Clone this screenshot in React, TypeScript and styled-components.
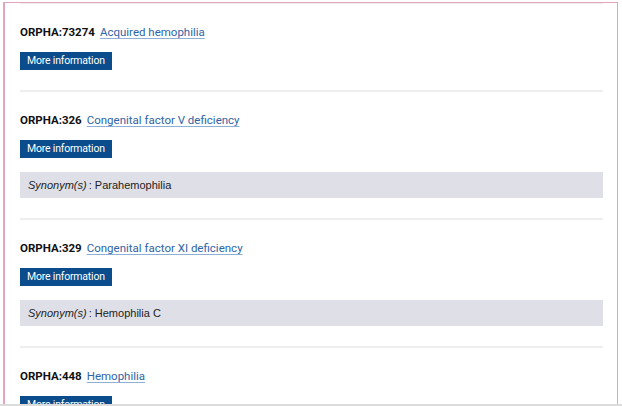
import styled, { createGlobalStyle } from 'styled-components';

interface IDisease {
    orpha: string;
    name: string;
    synonyms?: string[];
}

const diseases: IDisease[] = [
    { orpha: '73274', name: 'Acquired hemophilia' },
    { orpha: '326', name: 'Congenital factor V deficiency', synonyms: ['Parahemophilia'] },
    { orpha: '329', name: 'Congenital factor XI deficiency', synonyms: ['Hemophilia C'] },
    { orpha: '448', name: 'Hemophilia' },
];

const GlobalStyle = createGlobalStyle`
html, body {
  margin:0;
  padding:0;
  background:#fff;
  overflow:hidden;
}
body {
  font-family: Roboto, "Liberation Sans", Arial, sans-serif;
  color:#1a1a1a;
}
`;

const Page = styled.div`
height:406px;
box-sizing:border-box;
overflow:hidden;
border-bottom:2px solid #dcdcdc;
padding-top:2px;
`;

const Frame = styled.div`
margin-left:3px;
width:615px;
height:100%;
box-sizing:border-box;
border:1px solid #e7a4b8;
border-bottom:none;
border-left-width:2px;
padding:0 14px 0 15px;
`;

const List = styled.ul`
list-style:none;
margin:0;
padding:0;
border-top:1px solid #eeeeee;
`;

const Item = styled.li`
padding:19px 0 20px;
border-bottom:2px solid #eeeeee;
`;

const Title = styled.div`
display:flex;
align-items:baseline;
gap:5px;
height:18px;
line-height:18px;
font-size:11.5px;
`;

const Orpha = styled.span`
font-weight:700;
color:#111;
`;

const Name = styled.a`
color:#2f64a6;
text-decoration:underline;
text-decoration-color:#8fb0d6;
text-underline-offset:2px;
cursor:pointer;
`;

const MoreButton = styled.button`
display:block;
margin-top:11px;
height:18px;
padding:0 7px;
border:none;
border-radius:0;
background:#0b4c8c;
color:#fff;
font-family: Roboto, "Liberation Sans", Arial, sans-serif;
font-size:10.5px;
letter-spacing:-0.2px;
line-height:18px;
cursor:pointer;
`;

const Synonyms = styled.div`
margin-top:14px;
height:26px;
line-height:26px;
padding:0 8px;
background:#dfdfe7;
font-family:"Liberation Sans", Arial, sans-serif;
font-size:11px;
color:#222;
`;

const Label = styled.em`
font-style:italic;
margin-right:2px;
`;

function App() {
    return (
        <Page>
            <GlobalStyle />
            <Frame>
                <List>
                    {diseases.map((d) => (
                        <Item key={d.orpha}>
                            <Title>
                                <Orpha>ORPHA:{d.orpha}</Orpha>
                                <Name>{d.name}</Name>
                            </Title>
                            <MoreButton>More information</MoreButton>
                            {d.synonyms && (
                                <Synonyms>
                                    <Label>Synonym(s)</Label>: {d.synonyms.join(', ')}
                                </Synonyms>
                            )}
                        </Item>
                    ))}
                </List>
            </Frame>
        </Page>
    );
}

export default App;
